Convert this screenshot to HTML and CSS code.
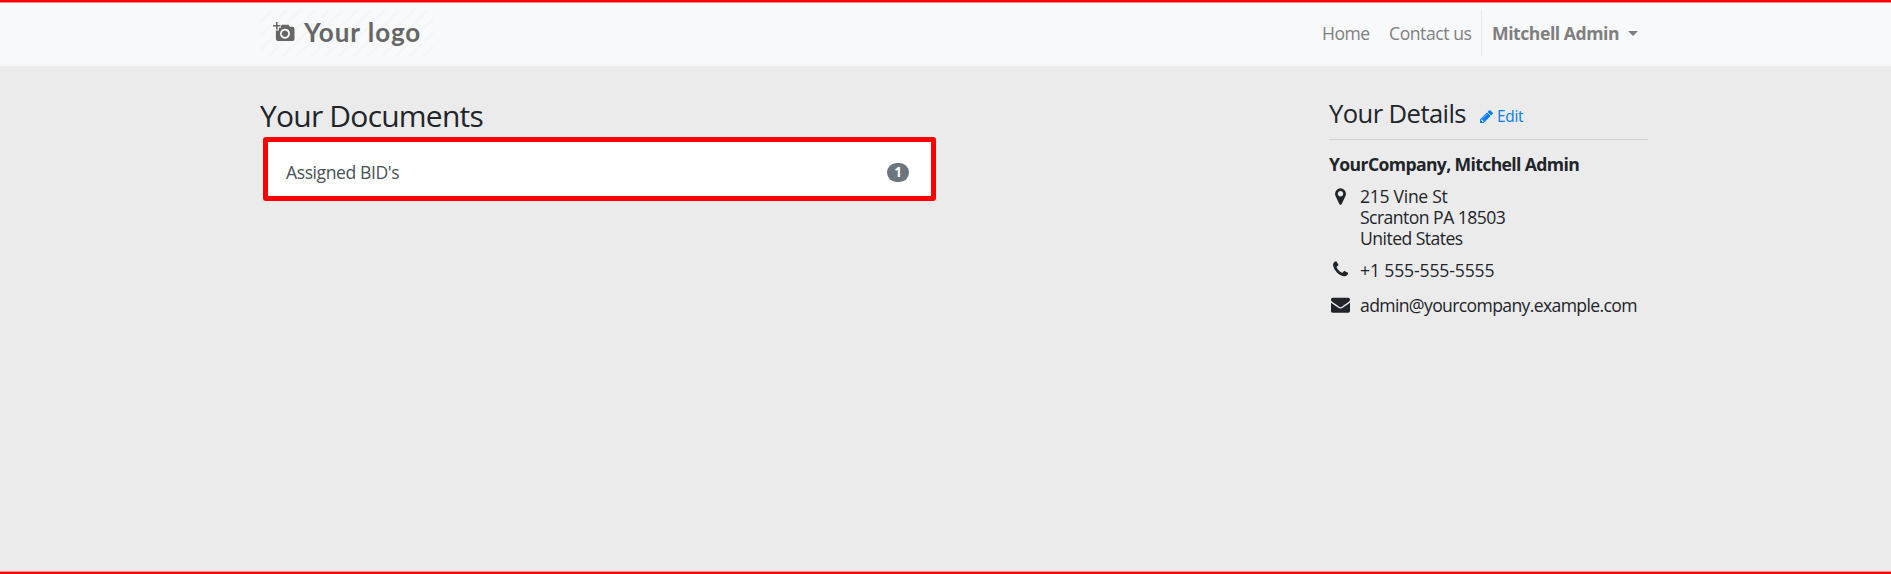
FILE: index.html
```
<!DOCTYPE html>
<html lang="en">
<head>
<meta charset="utf-8">
<title>Your Documents</title>
<link rel="stylesheet" href="styles.css">
</head>
<body>
<header class="navbar">
  <a class="logo">
    <svg class="logo-icon" viewBox="0 0 22 20"><path fill="currentColor" fill-rule="evenodd" d="M3 0h1.600v3H7.500v1.500H4.600V7.500H3V4.500H0V3h3zM9 2.700h6.500l1.500 2h2.500q2 0 2 2v10.300q0 2-2 2H4.900q-2 0-2-2V8.500H5.800V5.700H8V4zM12 6.700a5 5 0 1 0 .01 0zM12 8.500a3.200 3.200 0 1 1-.01 0z"/></svg>
    <span class="logo-text">Your logo</span>
  </a>
  <nav class="menu">
    <a class="home">Home</a>
    <a class="contact">Contact us</a>
    <a class="user"><b class="user-name">Mitchell Admin</b><i class="caret"></i></a>
  </nav>
</header>
<main class="content">
  <section class="documents">
    <h3 class="docs-title"><span>Your Documents</span></h3>
    <a class="doc-row"><span class="doc-name">Assigned BID's</span><span class="badge">1</span></a>
  </section>
  <aside class="details">
    <div class="details-head">
      <h4 class="details-title">Your Details</h4>
      <a class="edit"><svg class="pencil" viewBox="128 128 1536 1536"><path fill="currentColor" d="M491 1536l91-91-235-235-91 91v107h128v128h107zm523-928q0-22-22-22-10 0-17 7l-542 542q-7 7-7 17 0 22 22 22 10 0 17-7l542-542q7-7 7-17zm-54-192l416 416-832 832h-416v-416zm683 96q0 53-37 90l-166 166-416-416 166-165q36-38 90-38 53 0 91 38l235 234q37 39 37 91z"/></svg><span class="edit-text">Edit</span></a>
    </div>
    <b class="person">YourCompany, Mitchell Admin</b>
    <div class="line address">
      <svg class="icon" viewBox="0 0 1792 1792"><path fill="currentColor" d="M1152 640q0-106-75-181t-181-75-181 75-75 181 75 181 181 75 181-75 75-181zm256 0q0 109-33 179l-364 774q-16 33-47.500 52t-67.500 19-67.500-19-46.500-52l-365-774q-33-70-33-179 0-212 150-362t362-150 362 150 150 362z"/></svg>
      <div class="address-text"><span class="street">215 Vine St</span><span class="city">Scranton PA 18503</span><span class="country">United States</span></div>
    </div>
    <div class="line phone">
      <svg class="icon" viewBox="0 0 1792 1792"><path fill="currentColor" d="M1600 1240q0 27-10 70.500t-21 68.500q-21 50-122 106-94 51-186 51-27 0-53-3.500t-57.500-12.500-47-14.500-55.500-20.500-49-18q-98-35-175-83-127-79-264-216t-216-264q-48-77-83-175-3-9-18-49t-20.500-55.500-14.500-47-12.500-57.500-3.500-53q0-92 51-186 56-101 106-122 25-11 68.500-21t70.500-10q14 0 21 3 18 6 53 76 11 19 30 54t35 63.500 31 53.500q3 4 17.500 25t21.500 35.500 7 28.500q0 20-28.500 50t-62 55-62 53-28.500 46q0 9 5 22.500t8.500 20.500 14 24 11.500 19q76 137 174 235t235 174q2 1 19 11.500t24 14 20.500 8.500 22.500 5q18 0 46-28.500t53-62 55-62 50-28.500q14 0 28.500 7t35.500 21.500 25 17.500q25 15 53.500 31t63.500 35 54 30q70 35 76 53 3 7 3 21z"/></svg>
      <span class="phone-text">+1 555-555-5555</span>
    </div>
    <div class="line email">
      <svg class="icon" viewBox="0 0 1792 1792"><path fill="currentColor" d="M1792 710v794q0 66-47 113t-113 47h-1472q-66 0-113-47t-47-113v-794q44 49 101 87 362 246 497 345 57 42 92.500 65.500t94.500 48 110 24.500h2q51 0 110-24.500t94.500-48 92.500-65.500q170-123 498-345 57-39 100-87zm0-294q0 79-49 151t-122 123q-376 261-468 325-10 7-42.500 31t-54 38.500-52 32.500-57.500 27-50 9h-2q-23 0-50-9t-57.500-27-52-32.500-54-38.500-42.500-31q-91-64-262-182.500t-205-142.500q-62-42-117-115.500t-55-136.500q0-78 41.500-130t118.500-52h1472q65 0 112.500 47t47.500 113z"/></svg>
      <span class="email-text">admin@yourcompany.example.com</span>
    </div>
  </aside>
</main>
</body>
</html>
```
FILE: styles.css
```
* { box-sizing: border-box; }
body {
  margin: 0;
  height: 574px;
  display: flex;
  flex-direction: column;
  background: #ebebeb;
  border-bottom: 2px solid #f00;
  box-shadow: inset 0 -1px #f88;
  color: #212529;
  font: 17.6px/21px "Open Sans", "Noto Sans", sans-serif;
  white-space: nowrap;
  overflow: hidden;
}
h3, h4 { margin: 0; font-weight: 400; }
.navbar {
  height: 66px;
  flex: none;
  display: flex;
  justify-content: space-between;
  align-items: flex-start;
  padding: 8px 243px 0 260px;
  border-top: 2px solid #f00;
  box-shadow: inset 0 1px #f88;
  background: #f8f9fa;
  color: #7f7f80;
}
.logo {
  width: 174px;
  height: 46px;
  display: flex;
  padding: 12px 0 0 13px;
  color: #666;
  background: repeating-linear-gradient(135deg, #f8f9fa 0 7.500px, #f5f6f7 7.500px 10px);
}
.logo-icon { width: 22px; height: 20px; flex: none; }
.logo-text {
  margin: -4px 0 0 9px;
  font: 700 26px/28px Lato, sans-serif;
  letter-spacing: 0.950px;
}
.menu { display: flex; height: 46px; line-height: 47px; }
.home { width: 67px; letter-spacing: -0.500px; }
.contact { width: 92px; letter-spacing: -0.450px; }
.user {
  display: flex;
  align-items: center;
  width: 167px;
  padding-left: 10px;
  border-left: 1px solid #e8e9ea;
}
.user-name { width: 136px; letter-spacing: -0.450px; }
.caret { border: 5px solid transparent; border-top-color: #7f7f80; border-bottom: 0; }
.content { display: flex; justify-content: space-between; padding: 0 243px 0 260px; }
.documents { padding-top: 30px; }
.docs-title { height: 41px; font-size: 30px; line-height: 40px; letter-spacing: -0.780px; }
.doc-row {
  display: flex;
  justify-content: space-between;
  align-items: center;
  width: 673px;
  height: 64px;
  margin-left: 3px;
  padding: 7px 22px 0 18px;
  border: 5px solid #f00;
  border-radius: 3px;
  background: #fff;
  color: #495057;
}
.doc-name { letter-spacing: -0.430px; }
.badge {
  width: 22px;
  height: 19px;
  border-radius: 10px;
  background: #6c757d;
  color: #fff;
  font-size: 13.500px;
  font-weight: 700;
  line-height: 19px;
  text-align: center;
}
.details { width: 319px; padding-top: 31px; }
.details-head {
  display: flex;
  height: 43px;
  border-bottom: 1px solid #d1d1d1;
}
.details-title { width: 151px; font-size: 25.600px; line-height: 33px; letter-spacing: -0.580px; }
.edit { display: flex; height: 20px; margin-top: 10px; color: #007bff; font-size: 15.400px; line-height: 20px; letter-spacing: -0.250px; }
.pencil { width: 13px; height: 13px; margin: 3px 4px 0 0; }
.person { display: block; margin-top: 14px; line-height: 21px; letter-spacing: -0.630px; }
.line { display: flex; align-items: flex-start; }
.icon { width: 19px; height: 19px; margin: 0 10px 0 2px; flex: none; }
.address { margin-top: 11px; }
.address .icon { margin-top: 1px; }
.address-text { display: flex; flex-direction: column; }
.street { letter-spacing: -0.300px; }
.city, .country { letter-spacing: -0.550px; }
.phone { margin-top: 11px; }
.phone-text { letter-spacing: -0.150px; }
.email { margin-top: 14px; }
.email-text { letter-spacing: -0.640px; }
```
